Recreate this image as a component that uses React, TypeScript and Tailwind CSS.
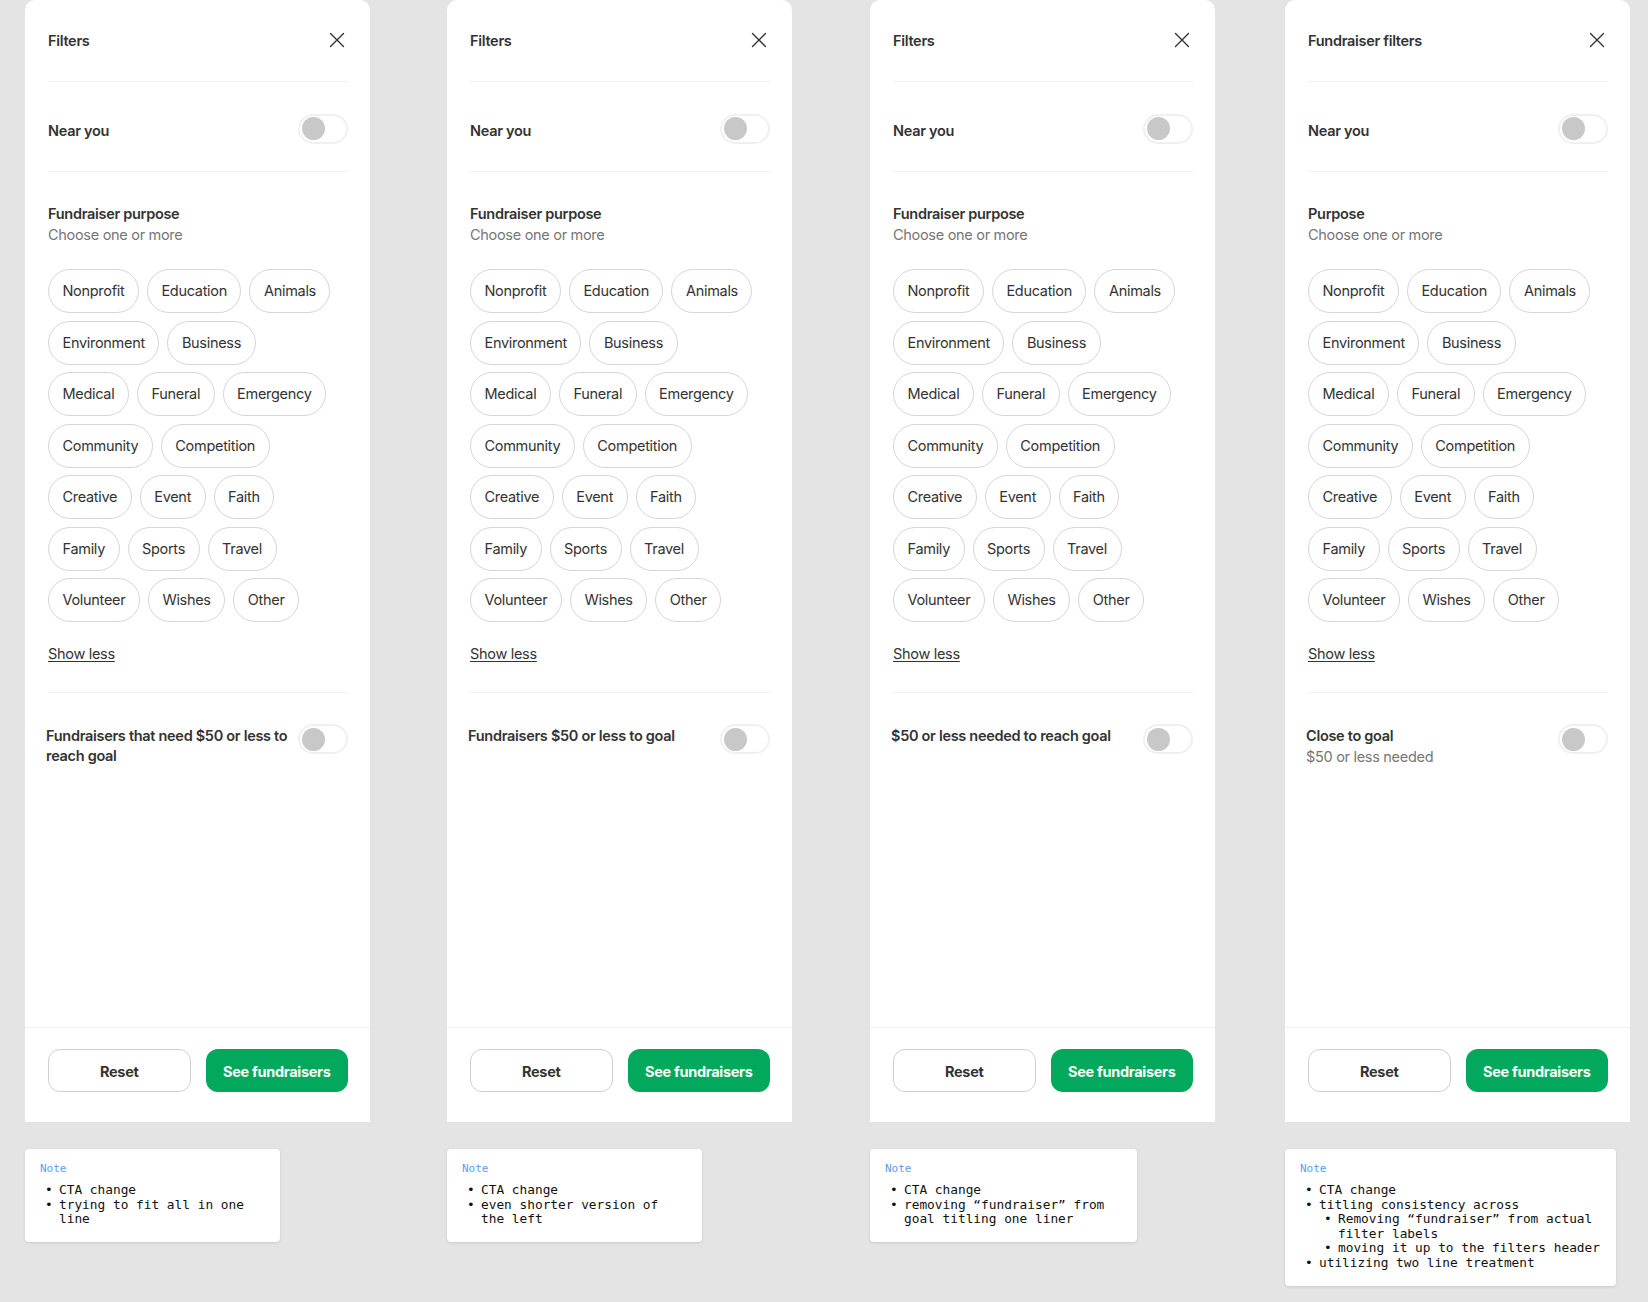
import React from "react";

const sans = "font-['Inter','Noto_Sans',sans-serif]";
const mono = "font-['DejaVu_Sans_Mono','Liberation_Mono',monospace]";
const t15 = "text-[14.5px] tracking-[-0.3px]";

const chipRows = [
    ["Nonprofit", "Education", "Animals"],
    ["Environment", "Business"],
    ["Medical", "Funeral", "Emergency"],
    ["Community", "Competition"],
    ["Creative", "Event", "Faith"],
    ["Family", "Sports", "Travel"],
    ["Volunteer", "Wishes", "Other"],
];

type NoteItem = { text: React.ReactNode; children?: React.ReactNode[] };

type Variant = {
    title: string;
    purpose: string;
    goal: React.ReactNode;
    goalSub?: string;
    noteWidth: string;
    note: NoteItem[];
    ml: string;
};

const variants: Variant[] = [
    {
        title: "Filters",
        purpose: "Fundraiser purpose",
        goal: (
            <>
                Fundraisers that need $50 or less to
                <br />
                reach goal
            </>
        ),
        noteWidth: "w-[255px]",
        note: [
            { text: "CTA change" },
            {
                text: (
                    <>
                        trying to fit all in one
                        <br />
                        line
                    </>
                ),
            },
        ],
        ml: "ml-0",
    },
    {
        title: "Filters",
        purpose: "Fundraiser purpose",
        goal: "Fundraisers $50 or less to goal",
        noteWidth: "w-[255px]",
        note: [
            { text: "CTA change" },
            {
                text: (
                    <>
                        even shorter version of
                        <br />
                        the left
                    </>
                ),
            },
        ],
        ml: "ml-[77px]",
    },
    {
        title: "Filters",
        purpose: "Fundraiser purpose",
        goal: "$50 or less needed to reach goal",
        noteWidth: "w-[267px]",
        note: [
            { text: "CTA change" },
            {
                text: (
                    <>
                        removing “fundraiser” from
                        <br />
                        goal titling one liner
                    </>
                ),
            },
        ],
        ml: "ml-[78px]",
    },
    {
        title: "Fundraiser filters",
        purpose: "Purpose",
        goal: "Close to goal",
        goalSub: "$50 or less needed",
        noteWidth: "w-[331px]",
        note: [
            { text: "CTA change" },
            {
                text: "titling consistency across",
                children: [
                    <>
                        Removing “fundraiser” from actual
                        <br />
                        filter labels
                    </>,
                    "moving it up to the filters header",
                ],
            },
            { text: "utilizing two line treatment" },
        ],
        ml: "ml-[70px]",
    },
];

const Toggle = () => (
    <div className="w-[50px] h-[30px] shrink-0 rounded-full border-2 border-[#f0f0f0] bg-white flex items-center pl-[2px]">
        <div className="w-[23px] h-[23px] rounded-full bg-[#c8c8c8]" />
    </div>
);

const CloseIcon = () => (
    <svg width="16" height="16" viewBox="0 0 16 16" className="text-[#333]">
        <path d="M1.5 1.5 L14.5 14.5 M14.5 1.5 L1.5 14.5" stroke="currentColor" strokeWidth="1.4" strokeLinecap="round" />
    </svg>
);

const Bullet = ({ children }: { children: React.ReactNode }) => (
    <div className="flex">
        <span className="w-[14px] shrink-0">•</span>
        <span className="whitespace-nowrap">{children}</span>
    </div>
);

const Panel = ({ v }: { v: Variant }) => (
    <div className={`flex flex-col w-[345px] shrink-0 ${v.ml}`}>
        <div className={`flex flex-col h-[1122px] bg-white rounded-t-[10px] ${sans} text-[#333]`}>
            <div className="flex-1 pl-[23px] pr-[22px]">
                <div className="h-[82px] flex items-center justify-between border-b border-[#f0f0f0]">
                    <span className={`${t15} font-semibold`}>{v.title}</span>
                    <span className="mr-[3px] mt-[-2px]">
                        <CloseIcon />
                    </span>
                </div>
                <div className="h-[90px] pt-[8px] flex items-center justify-between border-b border-[#f0f0f0]">
                    <span className={`${t15} font-semibold`}>Near you</span>
                    <span className="mt-[-4px]">
                        <Toggle />
                    </span>
                </div>
                <div className="pt-[32px] pb-[28px] border-b border-[#f0f0f0]">
                    <div className={`${t15} font-semibold leading-[20px]`}>{v.purpose}</div>
                    <div className={`${t15} text-[#767676] leading-[21px]`}>Choose one or more</div>
                    <div className="mt-[24px] flex flex-col gap-[7.5px]">
                        {chipRows.map((row, i) => (
                            <div key={i} className="flex gap-[8px]">
                                {row.map((c) => (
                                    <span
                                        key={c}
                                        className={`h-[44px] px-[13.5px] flex items-center rounded-full border border-[#d6d6d6] ${t15} text-[#333]`}
                                    >
                                        {c}
                                    </span>
                                ))}
                            </div>
                        ))}
                    </div>
                    <div className={`mt-[22px] ${t15} leading-[20px] underline underline-offset-2`}>Show less</div>
                </div>
                <div className="pt-[32px] ml-[-2px] flex items-start justify-between gap-2">
                    <div className="pt-[1px]">
                        <div className={`${t15} font-semibold leading-[20px] whitespace-nowrap`}>{v.goal}</div>
                        {v.goalSub && (
                            <div className={`${t15} text-[#767676] leading-[21px]`}>{v.goalSub}</div>
                        )}
                    </div>
                    <span className="mt-[-1px]">
                        <Toggle />
                    </span>
                </div>
            </div>
            <div className="h-[95px] border-t border-[#f2f2f2] pt-[21px] pl-[23px] pr-[22px] grid grid-cols-2 gap-[15px] items-start">
                <button className={`h-[43px] pt-[2px] rounded-[12px] border border-[#cfcfcf] bg-white ${t15} font-bold text-[#333]`}>
                    Reset
                </button>
                <button className={`h-[43px] pt-[2px] rounded-[12px] bg-[#02a95c] ${t15} font-bold text-white`}>
                    See fundraisers
                </button>
            </div>
        </div>
        <div
            className={`${v.noteWidth} mt-[27px] bg-white rounded-[4px] shadow-[0_1px_3px_rgba(0,0,0,0.12)] pl-[15px] pr-3 pt-[13px] pb-[15px] ${mono}`}
        >
            <div className="text-[11px] leading-[14px] text-[#5b9cf2]">Note</div>
            <div className="mt-[7px] pl-[5px] text-[12.8px] leading-[14.6px] text-[#111]">
                {v.note.map((n, i) => (
                    <div key={i}>
                        <Bullet>{n.text}</Bullet>
                        {n.children && (
                            <div className="pl-[19px]">
                                {n.children.map((c, j) => (
                                    <Bullet key={j}>{c}</Bullet>
                                ))}
                            </div>
                        )}
                    </div>
                ))}
            </div>
        </div>
    </div>
);

export default function App() {
    return (
        <div className="w-[1648px] h-[1302px] bg-[#e4e4e4] flex items-start pl-[25px] overflow-hidden">
            {variants.map((v, i) => (
                <Panel key={i} v={v} />
            ))}
        </div>
    );
}
